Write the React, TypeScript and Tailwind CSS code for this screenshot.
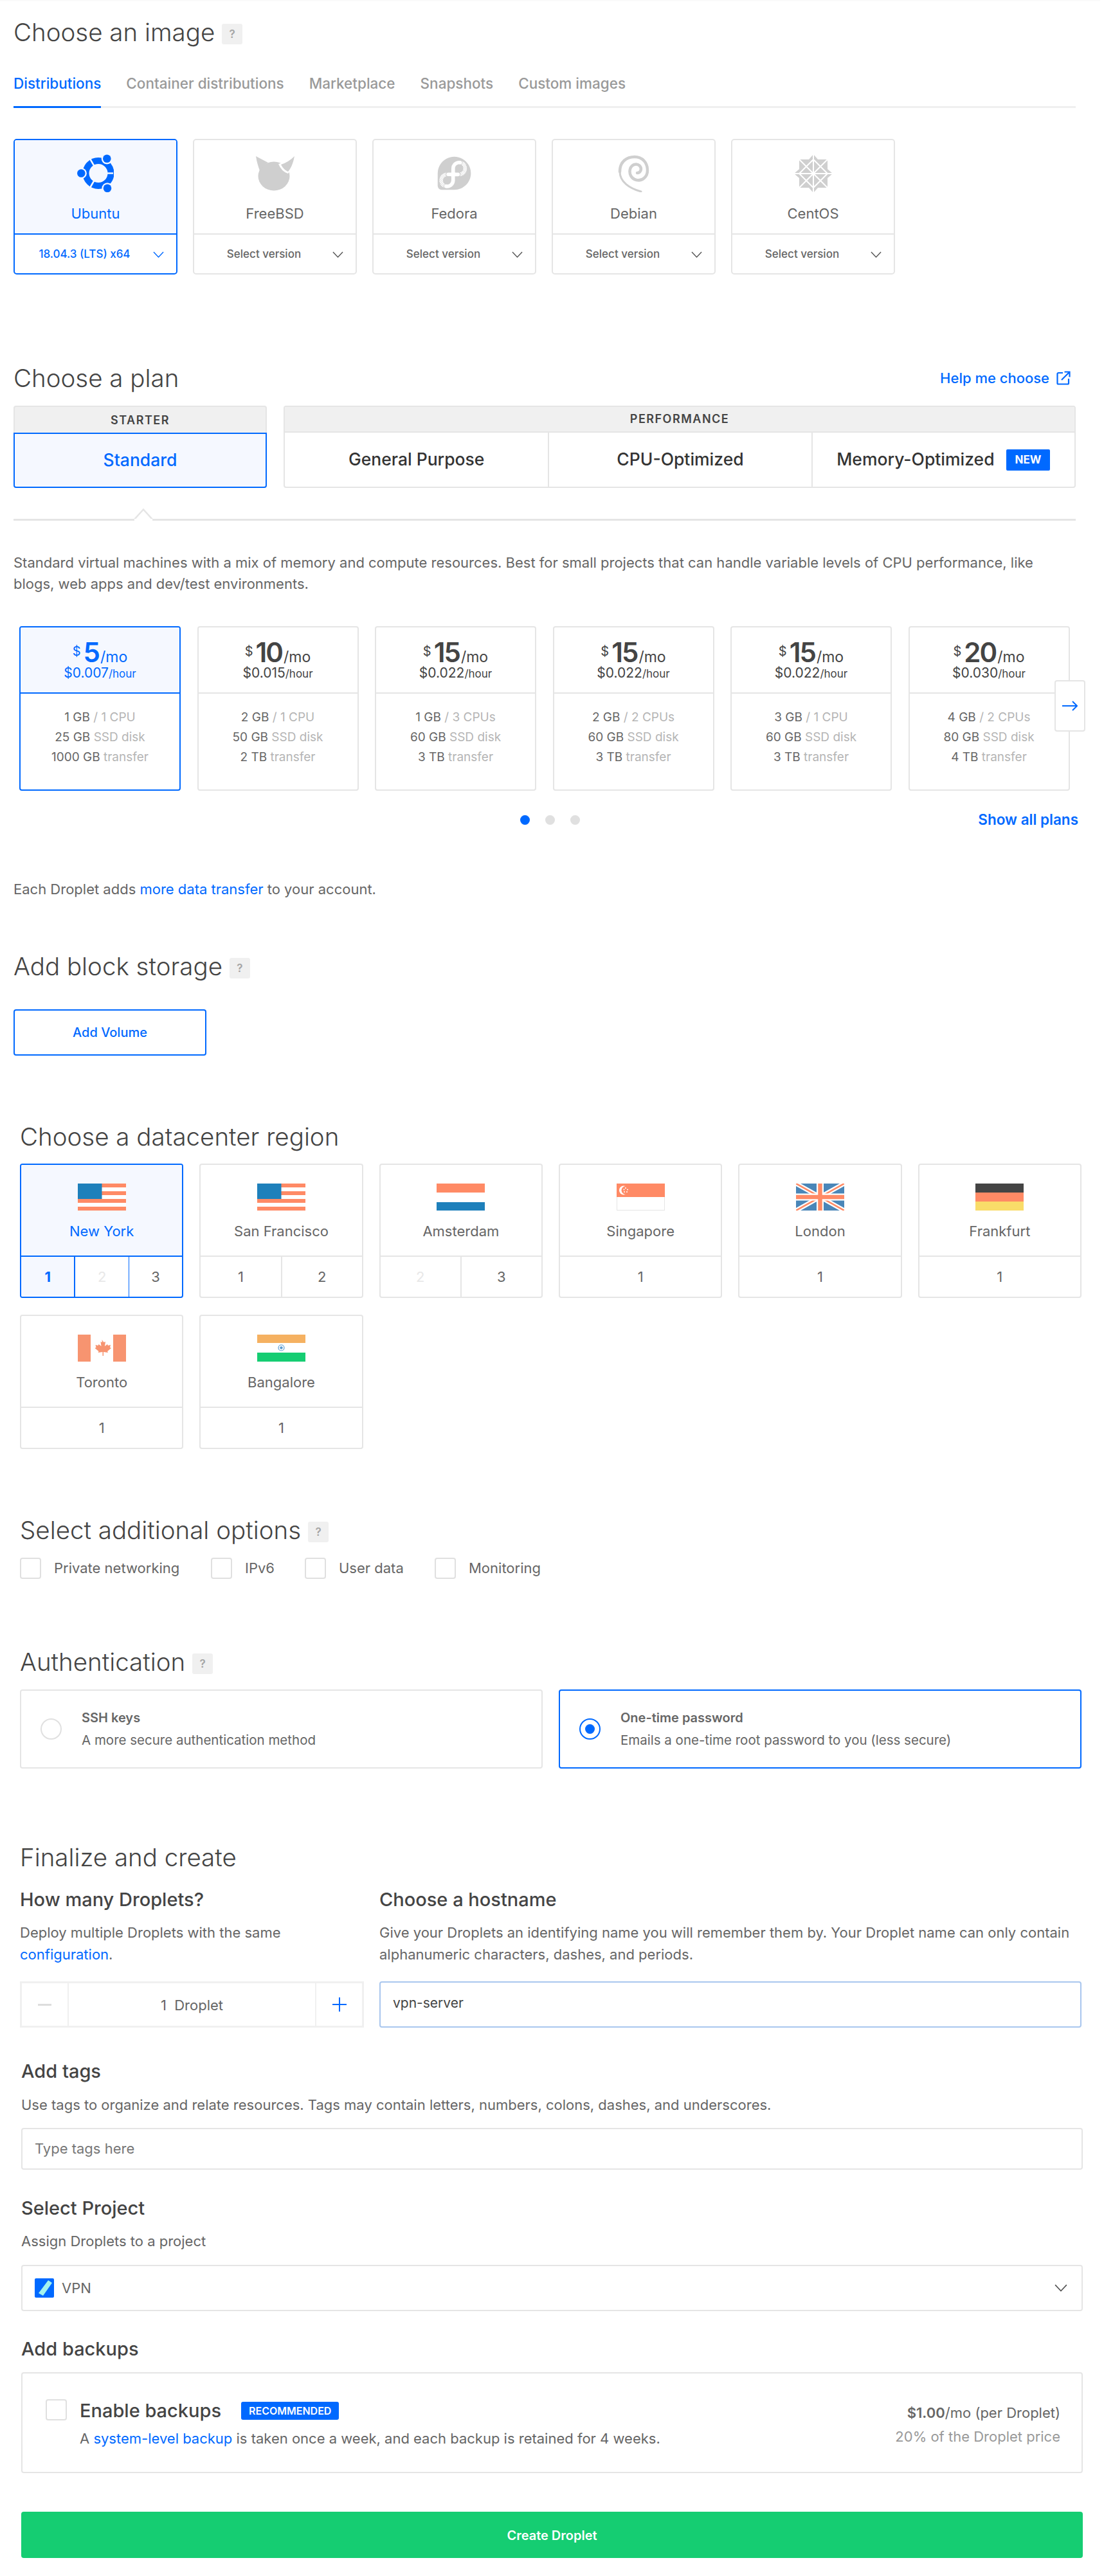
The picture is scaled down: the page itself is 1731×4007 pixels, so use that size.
import type { ReactNode } from 'react';
import { FaFedora } from 'react-icons/fa';

const BLUE = '#0069ff';
const LOGO_GREY = '#cfcfcf';

function Chevron({ className }: { className?: string }) {
  return (
    <svg viewBox="0 0 18 11" className={className} fill="none" stroke="currentColor" strokeWidth="1.5">
      <path d="M1 1l8 8.5L17 1" />
    </svg>
  );
}

function HelpBadge() {
  return (
    <span className="mt-[5px] flex h-[32px] w-[32px] items-center justify-center rounded-[3px] bg-[#f0f0f0] text-[17px] font-semibold text-[#a5a5a5]">
      ?
    </span>
  );
}

function Heading({ children, help }: { children: ReactNode; help?: boolean }) {
  return (
    <h2 className="flex h-[40px] items-center gap-[11px] text-[38.5px] leading-[40px] font-light text-[#444]">
      {children}
      {help && <HelpBadge />}
    </h2>
  );
}

function SubHeading({ children }: { children: ReactNode }) {
  return <h3 className="h-[36px] text-[29px] leading-[36px] font-medium text-[#444]">{children}</h3>;
}

function UbuntuLogo() {
  const bg = '#f5f8ff';
  return (
    <svg viewBox="0 0 57 59" className="h-[59px] w-[57px]">
      <circle cx="33" cy="29.5" r="19.5" fill="none" stroke={BLUE} strokeWidth="10" />
      <path d="M33 29.5H56M33 29.5L20 52M33 29.5L20 7" stroke={bg} strokeWidth="2.5" />
      <circle cx="46.3" cy="6.8" r="8.6" fill={bg} />
      <circle cx="6.3" cy="29.5" r="8.6" fill={bg} />
      <circle cx="47" cy="52.8" r="8.6" fill={bg} />
      <circle cx="46.3" cy="6.8" r="6.3" fill={BLUE} />
      <circle cx="6.3" cy="29.5" r="6.3" fill={BLUE} />
      <circle cx="47" cy="52.8" r="6.3" fill={BLUE} />
    </svg>
  );
}

function FreeBsdLogo() {
  return (
    <svg viewBox="0 0 60 59" className="h-[59px] w-[60px]">
      <ellipse cx="28" cy="34" rx="24.5" ry="22.5" fill={LOGO_GREY} />
      <path d="M0 3L19 13Q9 18 7 28Q2 16 0 3z" fill={LOGO_GREY} />
      <path d="M60 3Q50 11 35 15Q40 27 50 30Q58 20 60 3z" fill="#fff" />
      <path d="M60 3Q51 12 39 16Q43 24 50 27Q57 19 60 3z" fill={LOGO_GREY} />
    </svg>
  );
}

function DebianLogo() {
  return (
    <svg viewBox="0 0 49 58" className="h-[58px] w-[49px]" fill="none" stroke={LOGO_GREY} strokeLinecap="round">
      <path d="M36 57C18 52 3 42 3 26" strokeWidth="3" />
      <path d="M3 26C3 10 14 3 26 3C38 3 46 12 46 24C46 34 38 41 29 39C21 37 17 30 19 22C21 15 29 12 34 17C38 22 35 28 30 28" strokeWidth="4.5" />
    </svg>
  );
}

function CentosLogo() {
  return (
    <svg viewBox="0 0 60 60" className="h-[60px] w-[60px]">
      <rect x="8" y="8" width="44" height="44" fill={LOGO_GREY} />
      <path d="M30 0L37 8H23zM30 60L37 52H23zM0 30L8 23V37zM60 30L52 23V37z" fill={LOGO_GREY} />
      <path d="M30 0V60M0 30H60M8 8L52 52M52 8L8 52M30 8L52 30L30 52L8 30z" stroke="#fff" strokeWidth="2" fill="none" />
    </svg>
  );
}

const distros = [
  { name: 'Ubuntu', version: '18.04.3 (LTS) x64', selected: true, logo: <UbuntuLogo /> },
  { name: 'FreeBSD', version: 'Select version', logo: <FreeBsdLogo /> },
  { name: 'Fedora', version: 'Select version', logo: <FaFedora className="h-[59px] w-[59px] text-[#cfcfcf]" /> },
  { name: 'Debian', version: 'Select version', logo: <DebianLogo /> },
  { name: 'CentOS', version: 'Select version', logo: <CentosLogo /> },
];

function DistroCard({ name, version, selected, logo }: { name: string; version: string; selected?: boolean; logo: ReactNode }) {
  return (
    <div className={`flex h-[211px] w-[255px] flex-col overflow-hidden rounded-[5px] border-2 ${selected ? 'border-[#0069ff]' : 'border-[#e5e5e5]'}`}>
      <div className={`flex h-[147px] flex-col items-center border-b-2 pt-[22px] ${selected ? 'border-[#0069ff] bg-[#f5f8ff]' : 'border-[#e5e5e5]'}`}>
        <div className="flex h-[59px] items-center">{logo}</div>
        <span className={`mt-[20px] text-[22px] leading-[26px] ${selected ? 'text-[#0069ff]' : 'text-[#666]'}`}>{name}</span>
      </div>
      <div className={`flex flex-1 items-center pt-[2px] text-[17px] font-medium ${selected ? 'text-[#0069ff]' : 'text-[#666]'}`}>
        <span className="w-[217px] text-center">{version}</span>
        <Chevron className={`ml-[-2px] w-[17px] ${selected ? 'text-[#0069ff]' : 'text-[#555]'}`} />
      </div>
    </div>
  );
}

const plans = [
  { price: '5', hour: '$0.007', mem: '1 GB', cpu: '/ 1 CPU', disk: '25 GB', transfer: '1000 GB', selected: true },
  { price: '10', hour: '$0.015', mem: '2 GB', cpu: '/ 1 CPU', disk: '50 GB', transfer: '2 TB' },
  { price: '15', hour: '$0.022', mem: '1 GB', cpu: '/ 3 CPUs', disk: '60 GB', transfer: '3 TB' },
  { price: '15', hour: '$0.022', mem: '2 GB', cpu: '/ 2 CPUs', disk: '60 GB', transfer: '3 TB' },
  { price: '15', hour: '$0.022', mem: '3 GB', cpu: '/ 1 CPU', disk: '60 GB', transfer: '3 TB' },
  { price: '20', hour: '$0.030', mem: '4 GB', cpu: '/ 2 CPUs', disk: '80 GB', transfer: '4 TB' },
];

function PlanCard({ plan }: { plan: (typeof plans)[number] }) {
  const on = plan.selected;
  return (
    <div className={`h-[256px] w-[251px] overflow-hidden rounded-[4px] border-2 ${on ? 'border-[#0069ff]' : 'border-[#e5e5e5]'}`}>
      <div className={`h-[103px] border-b-2 pt-[19px] text-center ${on ? 'border-[#0069ff] bg-[#f5f8ff] text-[#0069ff]' : 'border-[#e5e5e5] text-[#444]'}`}>
        <div className="flex h-[40px] items-baseline justify-center leading-[40px]">
          <span className="mr-[4px] -translate-y-[10px] text-[20px]">$</span>
          <span className="text-[42px] font-semibold tracking-[-2px]">{plan.price}</span>
          <span className="ml-[2px] text-[23px]">/mo</span>
        </div>
        <div className="leading-[24px]">
          <span className="text-[21px]">{plan.hour}</span>
          <span className="text-[17px]">/hour</span>
        </div>
      </div>
      <div className="pt-[21px] text-center text-[19px] leading-[31px] text-[#666]">
        <div>
          {plan.mem} <span className="text-[#b5b5b5]">{plan.cpu}</span>
        </div>
        <div>
          {plan.disk} <span className="text-[#b5b5b5]">SSD disk</span>
        </div>
        <div>
          {plan.transfer} <span className="text-[#b5b5b5]">transfer</span>
        </div>
      </div>
    </div>
  );
}

const SALMON = '#ff8a65';
const FLAG_BLUE = '#1e80bb';

function FlagUS() {
  return (
    <svg viewBox="0 0 75 42" className="h-[42px] w-[75px]">
      <rect width="75" height="42" fill="#fff" />
      {[0, 12, 24, 36].map((y) => (
        <rect key={y} y={y} width="75" height="6" fill={SALMON} />
      ))}
      <rect width="37.5" height="24" fill={FLAG_BLUE} />
    </svg>
  );
}

function FlagNL() {
  return (
    <svg viewBox="0 0 75 42" className="h-[42px] w-[75px]">
      <rect width="75" height="14" fill={SALMON} />
      <rect y="29" width="75" height="13" fill={FLAG_BLUE} />
    </svg>
  );
}

function FlagSG() {
  return (
    <svg viewBox="0 0 75 42" className="h-[42px] w-[75px]">
      <rect x="0.5" y="0.5" width="74" height="41" fill="#fff" stroke="#e5e5e5" />
      <rect width="75" height="21" fill={SALMON} />
      <circle cx="11" cy="10.5" r="7" fill="#fff" />
      <circle cx="14" cy="10.5" r="6.5" fill={SALMON} />
      {[[14, 7], [17, 9.5], [16, 13], [12, 13], [11.5, 9.5]].map(([x, y]) => (
        <circle key={`${x}-${y}`} cx={x} cy={y} r="1" fill="#fff" />
      ))}
    </svg>
  );
}

function FlagUK() {
  return (
    <svg viewBox="0 0 75 42" className="h-[42px] w-[75px]">
      <rect width="75" height="42" fill="#4a86b8" />
      <path d="M0 0L75 42M75 0L0 42" stroke="#fff" strokeWidth="7" />
      <path d="M0 0L75 42M75 0L0 42" stroke={SALMON} strokeWidth="2.5" />
      <path d="M37.5 0V42M0 21H75" stroke="#fff" strokeWidth="11" />
      <path d="M37.5 0V42M0 21H75" stroke={SALMON} strokeWidth="6.5" />
    </svg>
  );
}

function FlagDE() {
  return (
    <svg viewBox="0 0 75 42" className="h-[42px] w-[75px]">
      <rect width="75" height="14" fill="#444" />
      <rect y="14" width="75" height="14" fill={SALMON} />
      <rect y="28" width="75" height="14" fill="#f9dc69" />
    </svg>
  );
}

function FlagCA() {
  return (
    <svg viewBox="0 0 75 42" className="h-[42px] w-[75px]">
      <rect width="20" height="42" fill="#f79470" />
      <rect x="55" width="20" height="42" fill="#f79470" />
      <path
        d="M37.5 8l3 4 2.5-1-1 7 4-3 1 2 4-1-1 4 2 1-6 5 1 2-7-1v6h-1.5v-6l-7 1 1-2-6-5 2-1-1-4 4 1 1-2 4 3-1-7 2.5 1z"
        fill="#f79470"
      />
    </svg>
  );
}

function FlagIN() {
  return (
    <svg viewBox="0 0 75 42" className="h-[42px] w-[75px]">
      <rect width="75" height="13" fill="#f5b161" />
      <rect y="28" width="75" height="14" fill="#15cd72" />
      <circle cx="37.5" cy="20.5" r="4.5" fill="none" stroke="#5b9bd0" strokeWidth="1.2" />
      <circle cx="37.5" cy="20.5" r="2.2" fill="#5b9bd0" />
    </svg>
  );
}

const regions = [
  { name: 'New York', flag: <FlagUS />, nums: ['1', '2', '3'], disabled: ['2'], selected: true },
  { name: 'San Francisco', flag: <FlagUS />, nums: ['1', '2'], disabled: [] },
  { name: 'Amsterdam', flag: <FlagNL />, nums: ['2', '3'], disabled: ['2'] },
  { name: 'Singapore', flag: <FlagSG />, nums: ['1'], disabled: [] },
  { name: 'London', flag: <FlagUK />, nums: ['1'], disabled: [] },
  { name: 'Frankfurt', flag: <FlagDE />, nums: ['1'], disabled: [] },
  { name: 'Toronto', flag: <FlagCA />, nums: ['1'], disabled: [] },
  { name: 'Bangalore', flag: <FlagIN />, nums: ['1'], disabled: [] },
];

function RegionCard({ region }: { region: (typeof regions)[number] }) {
  const on = region.selected;
  return (
    <div className={`flex h-[209px] flex-col overflow-hidden rounded-[4px] border-2 ${on ? 'border-[#0069ff]' : 'border-[#e5e5e5]'}`}>
      <div className={`flex h-[143px] flex-col items-center border-b-2 pt-[29px] ${on ? 'border-[#0069ff] bg-[#f5f8ff]' : 'border-[#e5e5e5]'}`}>
        {region.flag}
        <span className={`mt-[19px] text-[22px] leading-[26px] ${on ? 'text-[#0069ff]' : 'text-[#666]'}`}>{region.name}</span>
      </div>
      <div className="flex flex-1">
        {region.nums.map((n, i) => {
          const off = region.disabled.includes(n);
          const first = on && i === 0;
          return (
            <div
              key={n}
              className={`flex flex-1 items-center justify-center text-[22px] ${i > 0 ? (on ? (i === 1 ? 'border-l-2 border-[#0069ff]' : 'border-l border-[#0069ff]') : 'border-l-2 border-[#e5e5e5]') : ''} ${first ? 'bg-[#f5f8ff] font-bold text-[#0069ff]' : off ? 'text-[#e8e8e8]' : 'text-[#666]'}`}
            >
              {n}
            </div>
          );
        })}
      </div>
    </div>
  );
}

function Checkbox() {
  return <span className="block h-[33px] w-[33px] shrink-0 rounded-[4px] border-2 border-[#e0e0e0] bg-white" />;
}

function AuthCard({ title, sub, selected }: { title: string; sub: string; selected?: boolean }) {
  return (
    <div className={`flex h-[123px] items-center gap-[31px] rounded-[4px] border-2 pl-[30px] ${selected ? 'border-[#0069ff]' : 'border-[#e5e5e5]'}`}>
      <span className={`flex h-[33px] w-[33px] items-center justify-center rounded-full border-2 ${selected ? 'border-[#0069ff]' : 'border-[#e0e0e0]'}`}>
        {selected && <span className="h-[15px] w-[15px] rounded-full bg-[#0069ff]" />}
      </span>
      <div>
        <div className="text-[20px] leading-[30px] font-semibold text-[#666]">{title}</div>
        <div className="mt-[5px] text-[20.5px] leading-[30px] text-[#666]">{sub}</div>
      </div>
    </div>
  );
}

export default function App() {
  return (
    <div className="min-h-[4007px] w-[1731px] bg-white font-[Inter,sans-serif] text-[#666]">
      <div className="h-[2px] w-[1711px] bg-[#fafafa]" />

      <section className="w-[1673px] pt-[28px] pl-[21px]">
        <Heading help>Choose an image</Heading>
        <div className="mt-[38px] flex h-[60px] gap-[39px] border-b-[3px] border-[#f0f0f0] text-[22.5px] font-medium text-[#999]">
          <span className="-mb-[3px] h-[60px] border-b-[3px] border-[#0069ff] pt-[5px] text-[#0069ff]">Distributions</span>
          <span className="pt-[5px]">Container distributions</span>
          <span className="pt-[5px]">Marketplace</span>
          <span className="pt-[5px]">Snapshots</span>
          <span className="pt-[5px]">Custom images</span>
        </div>
        <div className="mt-[48px] flex gap-[24px]">
          {distros.map((d) => (
            <DistroCard key={d.name} {...d} />
          ))}
        </div>
      </section>

      <section className="mt-[141px] w-[1673px] pl-[21px]">
        <div className="flex items-center justify-between">
          <Heading>Choose a plan</Heading>
          <a className="flex items-center gap-[11px] pr-[8px] text-[22px] font-medium text-[#0069ff]">
            Help me choose
            <svg viewBox="0 0 22 22" className="h-[22px] w-[22px]" fill="none" stroke="currentColor" strokeWidth="2.2">
              <path d="M10 3H3a1.5 1.5 0 0 0-1.500 1.500V19A1.500 1.500 0 0 0 3 20.500h14.500A1.500 1.500 0 0 0 19 19v-7" />
              <path d="M8 14L20 2M12.500 1.500H20.500V9.500" />
            </svg>
          </a>
        </div>

        <div className="mt-[23px] flex gap-[26px] text-center">
          <div className="w-[394px]">
            <div className="h-[42px] rounded-t-[4px] border-2 border-b-0 border-[#e5e5e5] bg-[#f0f0f0] text-[18px] leading-[42px] font-semibold tracking-[1.5px] text-[#444]">
              STARTER
            </div>
            <div className="flex h-[86px] items-center justify-center rounded-b-[4px] border-2 border-[#0069ff] bg-[#f5f8ff] text-[26.5px] font-medium text-[#0069ff]">
              Standard
            </div>
          </div>
          <div className="w-[1232px] overflow-hidden rounded-[4px] border-2 border-[#e5e5e5]">
            <div className="h-[40px] border-b-2 border-[#e5e5e5] bg-[#f0f0f0] text-[18px] leading-[38px] font-semibold tracking-[1.5px] text-[#444]">
              PERFORMANCE
            </div>
            <div className="grid h-[84px] grid-cols-3 text-[26.5px] font-medium text-[#333]">
              <div className="flex items-center justify-center">General Purpose</div>
              <div className="flex items-center justify-center border-l-2 border-[#e5e5e5]">CPU-Optimized</div>
              <div className="flex items-center justify-center gap-[18px] border-l-2 border-[#e5e5e5]">
                Memory-Optimized
                <span className="rounded-[2px] bg-[#0069ff] px-[14px] text-[17px] leading-[33px] font-bold text-white">NEW</span>
              </div>
            </div>
          </div>
        </div>

        <div className="relative mt-[48px] h-[3px] bg-[#e5e5e5]">
          <svg viewBox="0 0 32 19" className="absolute bottom-0 left-[186px] h-[19px] w-[32px]">
            <path d="M0 19L16 1.500L32 19" fill="#fff" stroke="#e5e5e5" strokeWidth="2.500" />
            <rect x="2" y="16" width="28" height="3" fill="#fff" />
          </svg>
        </div>

        <p className="mt-[49px] text-[22px] leading-[33px] text-[#666]">
          Standard virtual machines with a mix of memory and compute resources. Best for small projects that can handle variable levels of CPU performance, like
          <br />
          blogs, web apps and dev/test environments.
        </p>

        <div className="relative mt-[49px] ml-[9px] flex gap-[25.5px]">
          {plans.map((p, i) => (
            <PlanCard key={i} plan={p} />
          ))}
          <button className="absolute top-[84px] left-[1610px] flex h-[80px] w-[48px] items-center justify-center rounded-[4px] border-2 border-[#e5e5e5] bg-white text-[#0069ff]">
            <svg viewBox="0 0 24 16" className="h-[16px] w-[24px]" fill="none" stroke="currentColor" strokeWidth="2">
              <path d="M0 8H23M16 1l7 7-7 7" />
            </svg>
          </button>
        </div>

        <div className="mt-[30px] flex h-[30px] w-[1656px] items-center justify-between pl-[788px]">
          <div className="flex gap-[24px]">
            <span className="h-[15px] w-[15px] rounded-full bg-[#0069ff]" />
            <span className="h-[15px] w-[15px] rounded-full bg-[#e0e0e0]" />
            <span className="h-[15px] w-[15px] rounded-full bg-[#e0e0e0]" />
          </div>
          <a className="text-[22.5px] font-semibold text-[#0069ff]">Show all plans</a>
        </div>

        <p className="mt-[80px] text-[22px] leading-[26px] text-[#666]">
          Each Droplet adds <a className="text-[#0069ff]">more data transfer</a> to your account.
        </p>
      </section>

      <section className="mt-[87px] pl-[21px]">
        <Heading help>Add block storage</Heading>
        <button className="mt-[47px] h-[72px] w-[300px] rounded-[4px] border-2 border-[#0069ff] text-[20px] font-medium text-[#0069ff]">
          Add Volume
        </button>
      </section>

      <section className="mt-[106px] w-[1682px] pl-[31px]">
        <Heading>Choose a datacenter region</Heading>
        <div className="mt-[22px] grid grid-cols-6 gap-x-[25px] gap-y-[26px]">
          {regions.map((r) => (
            <RegionCard key={r.name} region={r} />
          ))}
        </div>

        <div className="mt-[106px]">
          <Heading help>Select additional options</Heading>
        </div>
        <div className="mt-[23px] flex items-center text-[22px] text-[#666]">
          <Checkbox />
          <span className="w-[264px] pl-[20px]">Private networking</span>
          <Checkbox />
          <span className="w-[113px] pl-[20px]">IPv6</span>
          <Checkbox />
          <span className="w-[169px] pl-[20px]">User data</span>
          <Checkbox />
          <span className="pl-[20px]">Monitoring</span>
        </div>

        <div className="mt-[109px]">
          <Heading help>Authentication</Heading>
        </div>
        <div className="mt-[23px] grid grid-cols-2 gap-[25px]">
          <AuthCard title="SSH keys" sub="A more secure authentication method" />
          <AuthCard title="One-time password" sub="Emails a one-time root password to you (less secure)" selected />
        </div>

        <div className="mt-[118px]">
          <Heading>Finalize and create</Heading>
        </div>
        <div className="mt-[28px] flex gap-[24px]">
          <div className="w-[535px] shrink-0">
            <SubHeading>How many Droplets?</SubHeading>
            <p className="mt-[16px] text-[22px] leading-[34px]">
              Deploy multiple Droplets with the same
              <br />
              <a className="text-[#0069ff]">configuration</a>.
            </p>
            <div className="mt-[25px] flex h-[72px] border-[3px] border-[#f0f0f0]">
              <div className="flex w-[71px] items-center justify-center">
                <span className="h-[3px] w-[21px] bg-[#ddd]" />
              </div>
              <div className="flex flex-1 items-center justify-center border-x-2 border-[#f0f0f0] pt-[2px] text-[22px]">1&nbsp;&nbsp;Droplet</div>
              <div className="flex w-[71px] items-center justify-center">
                <svg viewBox="0 0 22 22" className="h-[22px] w-[22px]" stroke="#0069ff" strokeWidth="2">
                  <path d="M11 0V22M0 11H22" />
                </svg>
              </div>
            </div>
          </div>
          <div className="flex-1">
            <SubHeading>Choose a hostname</SubHeading>
            <p className="mt-[16px] text-[22px] leading-[34px]">
              Give your Droplets an identifying name you will remember them by. Your Droplet name can only contain
              <br />
              alphanumeric characters, dashes, and periods.
            </p>
            <div className="mt-[25px] flex h-[72px] items-center rounded-[4px] border-2 border-[#a9c6ee] pb-[4px] pl-[19px] text-[21px] text-[#444]">vpn-server</div>
          </div>
        </div>
      </section>

      <section className="mt-[50px] w-[1684px] pl-[33px] pb-[28px]">
        <SubHeading>Add tags</SubHeading>
        <p className="mt-[17px] text-[22px] leading-[34px]">Use tags to organize and relate resources. Tags may contain letters, numbers, colons, dashes, and underscores.</p>
        <div className="mt-[19px] flex h-[65px] items-center rounded-[4px] border-2 border-[#e5e5e5] pl-[19px] text-[22px] text-[#777]">Type tags here</div>

        <div className="mt-[42px]">
          <SubHeading>Select Project</SubHeading>
        </div>
        <p className="mt-[16px] text-[22px] leading-[34px]">Assign Droplets to a project</p>
        <div className="mt-[20px] flex h-[72px] items-center rounded-[4px] border-2 border-[#e5e5e5] pr-[22px] pl-[19px] text-[22px]">
          <svg viewBox="0 0 30 30" className="h-[30px] w-[30px]">
            <rect width="30" height="30" rx="2" fill="#0069ff" />
            <path d="M21 3l6 4-14 20-7-4z" fill="#a3f3ee" />
          </svg>
          <span className="ml-[12px] flex-1">VPN</span>
          <Chevron className="w-[20px] text-[#555]" />
        </div>

        <div className="mt-[41px]">
          <SubHeading>Add backups</SubHeading>
        </div>
        <div className="mt-[18px] flex h-[157px] justify-between rounded-[4px] border-2 border-[#e5e5e5] pt-[40px] pr-[33px] pl-[36px]">
          <div className="flex gap-[20px]">
            <Checkbox />
            <div>
              <div className="flex h-[36px] items-center gap-[31px] text-[29px] font-medium text-[#444]">
                Enable backups
                <span className="rounded-[3px] bg-[#0069ff] px-[12px] text-[16px] leading-[28px] font-semibold text-white">RECOMMENDED</span>
              </div>
              <div className="mt-[10px] text-[22px] leading-[30px]">
                A <a className="text-[#0069ff]">system-level backup</a> is taken once a week, and each backup is retained for 4 weeks.
              </div>
            </div>
          </div>
          <div className="pt-[6px] text-right text-[22px] leading-[30px]">
            <div>
              <b className="font-semibold">$1.00</b>/mo (per Droplet)
            </div>
            <div className="mt-[7px] text-[#999]">20% of the Droplet price</div>
          </div>
        </div>
        <button className="mt-[60px] h-[72px] w-full rounded-[4px] bg-[#15cd72] pt-[2px] text-[20px] font-semibold text-white">Create Droplet</button>
      </section>
    </div>
  );
}
